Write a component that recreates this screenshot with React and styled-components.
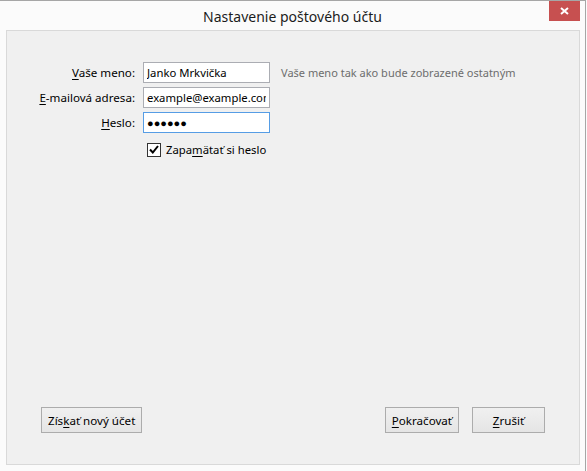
import React from 'react';
import styled, { createGlobalStyle } from 'styled-components';

const Global = createGlobalStyle`
  html, body { margin: 0; padding: 0; background: #fbfbfb; }
  body { font-family: "Noto Sans", "Open Sans", sans-serif; }
  * { box-sizing: border-box; }
`;

const Window = styled.div`
  width: 586px;
  height: 471px;
  border-top: 1px solid #a6a6a6;
  border-right: 1px solid #a6a6a6;
  background: #fbfbfb;
  display: flex;
  flex-direction: column;
`;

const TitleBar = styled.div`
  position: relative;
  height: 29px;
  flex: none;
  display: flex;
  align-items: center;
  justify-content: center;
  font-size: 14px;
  color: #1c1c1c;
  padding-top: 1px;
`;

const CloseButton = styled.div`
  position: absolute;
  top: 0;
  right: 5px;
  width: 31px;
  height: 20px;
  background: #c75050;
  display: flex;
  align-items: center;
  justify-content: center;
`;

const Panel = styled.div`
  flex: 1;
  margin: 0 5px 6px 6px;
  border: 1px solid #d9d9d9;
  background: #f0f0f0;
  display: flex;
  flex-direction: column;
  justify-content: space-between;
  padding: 31px 0 31px 0;
`;

const Form = styled.div`
  display: grid;
  grid-template-columns: 128px 127px auto;
  column-gap: 8px;
  row-gap: 4px;
  align-items: center;
  font-size: 11px;
  color: #000;
`;

const Label = styled.label`
  text-align: right;
  white-space: nowrap;
  font-size: 11.6px;
`;

const Key = styled.span`
  text-decoration: underline;
  text-underline-offset: 2px;
`;

const Field = styled.input`
  width: 127px;
  height: 21px;
  border: 1px solid ${p => (p.$focused ? '#569de5' : '#abadb3')};
  background: #fff;
  padding: 0 3px;
  margin: 0;
  font-family: inherit;
  font-size: 11.3px;
  color: #000;
  outline: none;
`;

const PasswordField = styled(Field)`
  font-size: 11px;
`;

const Hint = styled.span`
  color: #6d6d6d;
  margin-left: 3px;
  white-space: nowrap;
`;

const CheckRow = styled.div`
  grid-column: 2 / 4;
  display: flex;
  align-items: center;
  gap: 5px;
  padding-left: 4px;
  margin-top: 4px;
  height: 17px;
  font-size: 11.3px;
`;

const CheckBox = styled.span`
  width: 14px;
  height: 14px;
  border: 1px solid #333;
  background: #fff;
  display: flex;
  align-items: center;
  justify-content: center;
`;

const ButtonBar = styled.div`
  display: flex;
  align-items: center;
  padding: 0 34px;
  gap: 13px;
`;

const Spacer = styled.div`
  flex: 1;
`;

const Button = styled.button`
  height: 26px;
  min-width: 73px;
  padding: 0 6px;
  border: 1px solid #acacac;
  background: linear-gradient(#f0f0f0, #e5e5e5);
  font-family: inherit;
  font-size: 11.6px;
  color: #000;
  margin: 0;
`;

export default function App() {
  return (
    <>
      <Global />
      <Window>
        <TitleBar>
          Nastavenie poštového účtu
          <CloseButton>
            <svg width="9" height="8" viewBox="0 0 9 8">
              <path d="M1 1 L8 7 M8 1 L1 7" stroke="#fff" strokeWidth="2" />
            </svg>
          </CloseButton>
        </TitleBar>
        <Panel>
          <Form>
            <Label><Key>V</Key>aše meno:</Label>
            <Field defaultValue="Janko Mrkvička" />
            <Hint>Vaše meno tak ako bude zobrazené ostatným</Hint>

            <Label><Key>E</Key>-mailová adresa:</Label>
            <Field defaultValue="example@example.com" />
            <span />

            <Label><Key>H</Key>eslo:</Label>
            <PasswordField $focused defaultValue="●●●●●●" />
            <span />

            <span />
            <CheckRow>
              <CheckBox>
                <svg width="10" height="9" viewBox="0 0 10 9">
                  <path d="M1 4.5 L3.8 7.5 L9 1" fill="none" stroke="#000" strokeWidth="2" />
                </svg>
              </CheckBox>
              <span>Zapa<Key>m</Key>ätať si heslo</span>
            </CheckRow>
          </Form>
          <ButtonBar>
            <Button>Zís<Key>k</Key>ať nový účet</Button>
            <Spacer />
            <Button><Key>P</Key>okračovať</Button>
            <Button><Key>Z</Key>rušiť</Button>
          </ButtonBar>
        </Panel>
      </Window>
    </>
  );
}
